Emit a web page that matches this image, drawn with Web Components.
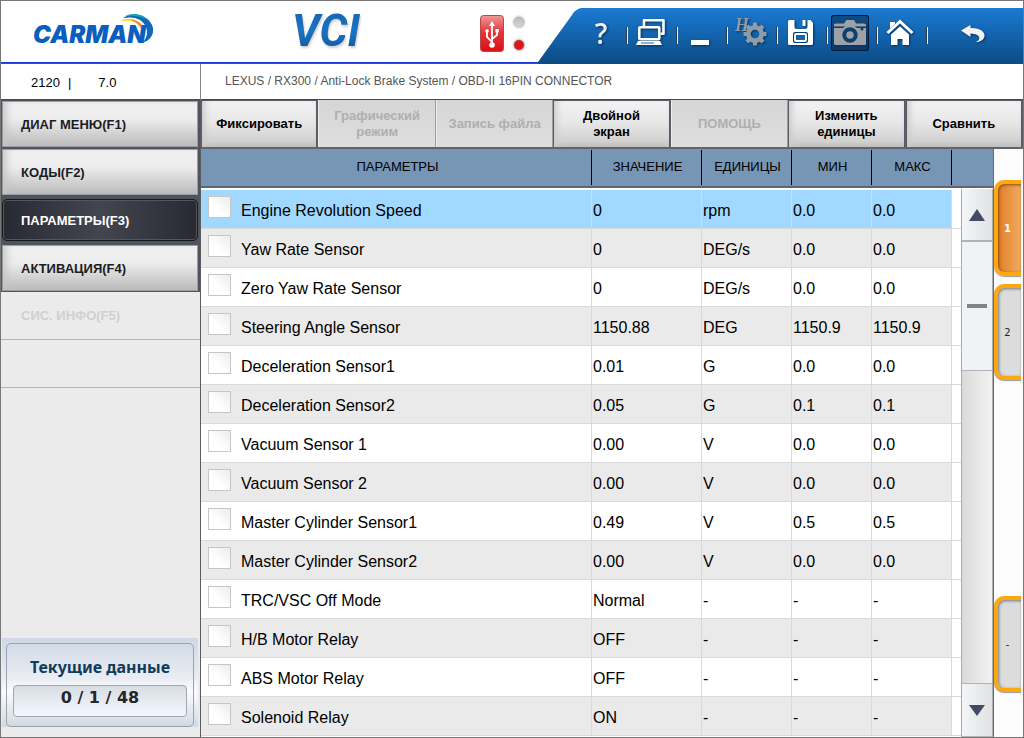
<!DOCTYPE html>
<html lang="ru">
<head>
<meta charset="utf-8">
<title>CARMAN VCI</title>
<style>
html,body{margin:0;height:100%;}
body{font-family:"Liberation Sans",Arial,sans-serif;background:#fff;color:#000;overflow:hidden;}
</style>
</head>
<body>
<vci-app></vci-app>
<script>
const define=(name,html,init)=>{
  const t=document.createElement('template');
  t.innerHTML=html;
  customElements.define(name,class extends HTMLElement{
    constructor(){
      super();
      this.attachShadow({mode:'open'}).append(t.content.cloneNode(true));
    }
    connectedCallback(){ if(init) init(this.shadowRoot,this); }
  });
};

define('tool-button',`
<style>
:host{display:block;flex:none;width:38px;height:36px;}
button{display:block;box-sizing:border-box;width:100%;height:100%;padding:0;border:0;border-radius:3px;background:none;overflow:hidden;}
:host([pressed]) button{background:linear-gradient(#114b84,#093a69);box-shadow:inset 0 0 0 1px #061a38;}
::slotted(svg){display:block;width:38px;height:36px;filter:drop-shadow(1px 1px 1px #06305c);}
</style>
<button type="button"><slot></slot></button>`,
(r,h)=>r.querySelector('button').setAttribute('aria-label',h.getAttribute('label')));

define('app-header',`
<style>
:host{display:flex;height:63px;align-items:flex-start;background:linear-gradient(#1238d6,#1238d6) 0 61px/100% 1px no-repeat,linear-gradient(#555,#555) 0 62px/100% 1px no-repeat,#fff;}
.brand{flex:none;width:134px;height:44px;margin:9px 0 0 31px;overflow:visible;}
.vci{flex:none;width:100px;height:52px;margin:5px 0 0 117px;overflow:visible;}
.link{flex:none;width:48px;height:38px;margin:13px 11px 0 auto;}
nav{display:flex;flex:none;height:56px;margin-top:7px;}
.slope{flex:none;width:43px;height:56px;}
.bar{display:flex;align-items:flex-start;padding:7px 30px 0 0;background:linear-gradient(#1b7ad0,#1467b4 40%,#0c4b82);}
i{flex:none;width:2px;height:17px;margin:12px 3px 0 7px;background:linear-gradient(90deg,#333b44 50%,#e8eef4 50%);}
.gap{width:24px;flex:none;}
</style>
<svg class="brand" viewBox="0 0 134 44">
  <path d="M91 8C101 1 118 5 121 18C122 26 117 31 110 33C117 27 117 16 108 10C103 7 97 7 91 8Z" fill="#1268bd"/>
  <path d="M93 6C101 2 111 4 116 10C109 6 101 5 93 6Z" fill="#16a3b8"/>
  <path d="M88 11C95 7 105 8 110 15C104 11 96 10 88 11Z" fill="#f3e11b"/>
  <path d="M98 9C110 11 115 19 112 27C111 19 107 14 98 9Z" fill="#e98a3a"/>
  <text x="1" y="33" font-family="Inter,sans-serif" font-size="24" font-weight="900" font-style="italic" fill="#0a5ebd">CARMAN</text>
</svg>
<svg class="vci" viewBox="0 0 100 52">
  <defs><linearGradient id="v" x1="0" y1="0" x2="0" y2="1"><stop offset="0" stop-color="#1560ae"/><stop offset=".5" stop-color="#1b73c4"/><stop offset="1" stop-color="#124f90"/></linearGradient></defs>
  <text x="9" y="40" font-family="Roboto,sans-serif" font-size="44" font-weight="700" font-style="italic" fill="url(#v)" style="filter:drop-shadow(1px 2px 1px #ccc)">VCI</text>
</svg>
<svg class="link" viewBox="0 0 48 38" role="img" aria-label="USB">
  <defs>
    <linearGradient id="u" x1="0" y1="0" x2="0" y2="1"><stop offset="0" stop-color="#f0989a"/><stop offset=".45" stop-color="#e2393c"/><stop offset="1" stop-color="#dc0d12"/></linearGradient>
    <linearGradient id="l" x1="0" y1="0" x2="0" y2="1"><stop offset="0" stop-color="#b9b9b9"/><stop offset="1" stop-color="#d8d8d8"/></linearGradient>
  </defs>
  <rect x="1.500" y="1.500" width="23" height="36" rx="3" fill="url(#u)" stroke="#b4484a"/>
  <g stroke="#fff" stroke-width="1.800" fill="none"><path d="M13 10V31M13 28L8 23V17M13 25L18 21V17"/></g>
  <path d="M13 7L16 12H10Z" fill="#fff"/><circle cx="13" cy="31" r="2.800" fill="#fff"/><circle cx="8" cy="17" r="1.800" fill="#fff"/><rect x="16.400" y="15" width="3.400" height="3.400" fill="#fff"/>
  <circle cx="40" cy="8" r="7" fill="#e9e9e9"/><circle cx="40" cy="8" r="5" fill="url(#l)" stroke="#aaa" stroke-width=".6"/>
  <circle cx="40" cy="31" r="7" fill="#e9e9e9"/><circle cx="40" cy="31" r="5" fill="#e01519" stroke="#8e6a6a" stroke-width=".6"/>
</svg>
<nav aria-label="Инструменты">
  <svg class="slope" viewBox="0 0 43 56"><defs><linearGradient id="s" x1="0" y1="0" x2="0" y2="1"><stop offset="0" stop-color="#1b7ad0"/><stop offset=".4" stop-color="#1467b4"/><stop offset="1" stop-color="#0c4b82"/></linearGradient></defs><path d="M43 0C39 1 36 3 34 7L0 54V56H43Z" fill="url(#s)"/></svg>
  <div class="bar">
  <tool-button label="Справка"><svg viewBox="0 0 38 36"><text x="20" y="29" text-anchor="middle" font-family="Open Sans,sans-serif" font-weight="600" font-size="28" fill="#f3f1ee">?</text></svg></tool-button><i></i>
  <tool-button label="Двойной экран"><svg viewBox="0 0 38 36"><g fill="none" stroke="#fff" stroke-width="2.600" stroke-linejoin="round"><path d="M13 11V5.300H32.500V18.700H29.500"/><rect x="8.300" y="12.300" width="20" height="12" rx="1"/></g><path d="M7 26H29L31 30H5Z" fill="#fff"/><path d="M10 28H23" stroke="#1467b4"/></svg></tool-button><i></i>
  <tool-button label="Свернуть"><svg viewBox="0 0 38 36"><rect x="10" y="25" width="18" height="5" fill="#fff"/></svg></tool-button><i></i>
  <tool-button label="Настройки"><svg viewBox="0 0 38 36"><text x="4" y="16" font-family="Liberation Serif,serif" font-size="18" font-weight="700" font-style="italic" fill="#8e9ba8">H</text><g fill="none" stroke="#8e9ba8"><circle cx="24" cy="19" r="6.700" stroke-width="4.800"/><g stroke-width="4.200"><path d="M24 7.500V12M24 26V30.500M12.500 19H17M31 19H35.500M15.900 10.900L18.500 13.500M29.500 24.500L32.100 27.100M32.100 10.900L29.500 13.500M15.900 27.100L18.500 24.500"/></g></g></svg></tool-button><i></i>
  <tool-button label="Сохранить"><svg viewBox="0 0 38 36"><path fill-rule="evenodd" fill="#fff" d="M8.500 5H13.500V12Q13.500 14 15.500 14H24.500Q26.500 14 26.500 12V5H29.500L32 8V28.500Q32 30 30.500 30H8.500Q7 30 7 28.500V6.500Q7 5 8.500 5ZM14 17Q12 17 12 19V26Q12 28 14 28H25Q27 28 27 26V19Q27 17 25 17Z"/><rect x="14" y="19" width="11" height="7" rx="1" fill="#1464ae" stroke="#fff" stroke-width="2"/><path d="M21.500 5V11H24.500V5Z" fill="#fff"/></svg></tool-button><i></i>
  <tool-button label="Снимок экрана" pressed><svg viewBox="0 0 38 36"><path fill="#9ca2a7" d="M3 9Q3 8.500 5 8.500H13L15 5.500Q15.300 5 16 5H22.500Q23 5 23.500 5.500L25 8.500H33Q35 8.500 35 10V11.500H3Z"/><path d="M3 13H35V28.500Q35 30 33.500 30H4.500Q3 30 3 28.500Z" fill="#9ca2a7"/><circle cx="19" cy="20" r="10" fill="#9ca2a7"/><circle cx="19" cy="20" r="5.700" fill="none" stroke="#103f6e" stroke-width="4"/><circle cx="31" cy="14" r="1.500" fill="#103f6e"/></svg></tool-button><i></i>
  <tool-button label="Домой"><svg viewBox="0 0 38 36"><path d="M6.500 18L19 6.500L31.500 18" fill="none" stroke="#fff" stroke-width="3"/><path d="M9 7H14V9L9 13.500Z" fill="#fff"/><path d="M10 19.500L19 11.500L28 19.500V30H21.500V24H16.500V30H10Z" fill="#fff"/></svg></tool-button><i></i>
  <div class="gap"></div>
  <tool-button label="Назад"><svg viewBox="0 0 38 36"><path fill="#f5f3f0" d="M6 15.500L15.500 10V13C25 12.500 30 17 29.500 21C29 24.500 26 27 21 27C26 25 26.500 19 15.500 18.500V22Z"/></svg></tool-button>
  </div>
</nav>`);

define('info-bar',`
<style>
:host{display:grid;grid-template-columns:199px 1fr;height:35px;border-bottom:1px solid #1c5286;line-height:37px;}
.ver{display:flex;gap:8px;padding-left:30px;font-size:13px;}
.ver b{font-weight:400;margin-left:19px;}
.path{border-left:1px solid #888;padding-left:24px;font-size:12px;line-height:34px;color:#555;white-space:nowrap;overflow:hidden;}
</style>
<div class="ver"><span>2120</span><span>|</span><b>7.0</b></div>
<div class="path">LEXUS / RX300 / Anti-Lock Brake System / OBD-II 16PIN CONNECTOR</div>`);

define('menu-item',`
<style>
:host{display:block;height:48px;}
button{box-sizing:border-box;display:block;width:100%;height:48px;padding:0 19px;border:1px solid #50545e;border-right-width:2px;text-align:left;font:700 13px "Liberation Sans",Arial,sans-serif;color:#1c1c22;background:linear-gradient(#f1f1f1,#ececec 40%,#b9b9b9);box-shadow:inset 0 0 0 1px #9a9da4,inset 8px 0 8px -4px #c4c4c4;}
:host([current]){background:#50545e;padding:2px 2px 2px 1px;height:44px;}
:host([current]) button{height:42px;margin-top:1px;padding:0 18px;border:1px solid #17181c;border-radius:5px;color:#fff;background:linear-gradient(90deg,#282933,#44464f 50%,#282933);box-shadow:inset 0 0 0 1px #53555f;}
:host([off]) button{border:0;border-bottom:1px solid #b3b3b3;padding-left:20px;background:none;box-shadow:none;color:#d0d0d0;}
</style>
<button type="button"><slot></slot></button>`,
(r,h)=>{const b=r.querySelector('button'); if(h.hasAttribute('off'))b.disabled=true; if(h.hasAttribute('current'))b.setAttribute('aria-current','page');});

define('status-panel',`
<style>
:host{display:block;padding:5px 4px 0;margin:0 2px 10px 1px;background:linear-gradient(#cfd8e4,#e9edf3 45%,#fbfcff 60%,#d0d9e1);}
section{border:1px solid #98a3ae;border-radius:5px;padding:9px 6px;text-align:center;}
h2{margin:0 0 4px;font:700 16px/28px "Noto Sans","Open Sans",sans-serif;color:#0f3c5c;}
output{display:block;height:30px;font:700 16px/24px "DejaVu Sans",sans-serif;color:#26262a;border:1px solid #a3a8af;border-radius:4px;background:linear-gradient(#d9dee3,#f4f7ff);}
</style>
<section><h2>Текущие данные</h2><output>0 / 1 / 48</output></section>`);

define('side-menu',`
<style>
:host{display:flex;flex-direction:column;justify-content:space-between;background:#ebebeb;min-height:0;}
nav{display:block;}
</style>
<nav aria-label="Меню">
<menu-item>ДИАГ МЕНЮ(F1)</menu-item><menu-item>КОДЫ(F2)</menu-item><menu-item current>ПАРАМЕТРЫ(F3)</menu-item><menu-item>АКТИВАЦИЯ(F4)</menu-item><menu-item off>СИС. ИНФО(F5)</menu-item><menu-item off></menu-item>
</nav>
<status-panel></status-panel>`);

define('action-button',`
<style>
:host{display:block;min-width:0;}
button{display:block;box-sizing:border-box;width:100%;height:100%;padding:0 8px;border:1px solid #5b5c66;border-width:1px 2px 0 1px;font:700 13px/16px "Liberation Sans",Arial,sans-serif;color:#000;background:linear-gradient(#f3f3f3,#e8e8e8 45%,#cbcbcb);box-shadow:inset 6px 0 6px -3px #ccc,inset 0 -4px 4px -2px #bdbdbd;}
button:disabled{color:#afafaf;border-color:#d9d9d9 #9c9c9c #d9d9d9 #eee;border-width:0 1px;background:linear-gradient(#d5d5d5,#dedede);box-shadow:none;}
</style>
<button type="button"><slot></slot></button>`,
(r,h)=>{ if(h.hasAttribute('off')) r.querySelector('button').disabled=true; });

define('action-bar',`
<style>
:host{display:grid;grid-template-columns:repeat(7,1fr);height:47px;border-bottom:2px solid #62646c;}
</style>
<action-button>Фиксировать</action-button><action-button off>Графический<br>режим</action-button><action-button off>Запись файла</action-button><action-button>Двойной<br>экран</action-button><action-button off>ПОМОЩЬ</action-button><action-button>Изменить<br>единицы</action-button><action-button>Сравнить</action-button>`);

define('list-scroller',`
<style>
:host{display:grid;grid-template-rows:53px 129px 1fr 54px;width:30px;border:1px solid #a9adb2;border-width:0 1px;background:linear-gradient(90deg,#dadada,#f2f2f2);}
button{display:grid;place-items:center;padding:0;border:0;background:linear-gradient(90deg,#f3f5f7,#e0e2e4);}
.up{border-bottom:2px solid #b0b4ba;}
.down{border:1px solid #b0b4ba;border-width:1px 0;}
.thumb{display:grid;place-items:center;background:#f0f3f5;border-bottom:1px solid #b0b4ba;}
.thumb::before{content:"";width:20px;height:4px;background:#828282;}
svg{display:block;width:16px;height:12px;}
</style>
<button type="button" class="up" aria-label="Вверх"><svg viewBox="0 0 16 12"><path d="M8 0L16 12H0Z" fill="#434a66"/></svg></button>
<div class="thumb"></div><div></div>
<button type="button" class="down" aria-label="Вниз"><svg viewBox="0 0 16 12"><path d="M0 1H16L8 12Z" fill="#434a66"/></svg></button>`);

const rows=[
['Engine Revolution Speed','0','rpm','0.0','0.0'],
['Yaw Rate Sensor','0','DEG/s','0.0','0.0'],
['Zero Yaw Rate Sensor','0','DEG/s','0.0','0.0'],
['Steering Angle Sensor','1150.88','DEG','1150.9','1150.9'],
['Deceleration Sensor1','0.01','G','0.0','0.0'],
['Deceleration Sensor2','0.05','G','0.1','0.1'],
['Vacuum Sensor 1','0.00','V','0.0','0.0'],
['Vacuum Sensor 2','0.00','V','0.0','0.0'],
['Master Cylinder Sensor1','0.49','V','0.5','0.5'],
['Master Cylinder Sensor2','0.00','V','0.0','0.0'],
['TRC/VSC Off Mode','Normal','-','-','-'],
['H/B Motor Relay','OFF','-','-','-'],
['ABS Motor Relay','OFF','-','-','-'],
['Solenoid Relay','ON','-','-','-']];

define('data-grid',`
<style>
:host{display:grid;grid-template-rows:1fr;min-height:0;overflow:hidden;border-right:1px solid #6a6a6a;}
table,list-scroller{grid-area:1/1;}
table{table-layout:fixed;width:100%;border-collapse:separate;border-spacing:0;align-self:start;}
.v{width:110px}.u{width:90px}.m{width:80px}.f{width:42px}
th{box-sizing:border-box;height:41px;padding:0 0 6px 3px;font-weight:400;font-size:13px;background:linear-gradient(#000,#000) 0 1px/1px 35px no-repeat,#7795b5;box-shadow:inset 0 -2px #fff,inset 0 -4px #5f666e;}
th:first-child{background:#7795b5;}
tbody td{box-sizing:border-box;height:39px;padding:6px 0 0 1px;vertical-align:top;font-size:16px;line-height:30px;border-left:1px solid #dadada;border-bottom:1px solid #dadada;white-space:nowrap;}
tbody td:first-child{border-left:0;padding-left:7px;}
tbody tr:nth-child(even) td{background:#eaeaea;}
tbody tr:first-child td{background:#a0d8ff;}
tbody tr td:last-child{background:#fff !important;}
label{display:flex;align-items:flex-start;gap:10px;}
input{appearance:none;flex:none;box-sizing:border-box;width:23px;height:22px;margin:0;border:1px solid #c6c6c6;background:linear-gradient(45deg,#fff 40%,#ececec);}
list-scroller{justify-self:end;margin-top:40px;}
</style>
<table>
<colgroup><col><col class="v"><col class="u"><col class="m"><col class="m"><col class="f"></colgroup>
<thead><tr><th>ПАРАМЕТРЫ</th><th>ЗНАЧЕНИЕ</th><th>ЕДИНИЦЫ</th><th>МИН</th><th>МАКС</th><th></th></tr></thead>
<tbody></tbody></table>
<list-scroller></list-scroller>`,
r=>{
  r.querySelector('tbody').innerHTML=rows.map(([n,...c])=>`<tr><td><label><input type="checkbox"><span>${n}</span></label></td>${c.map(x=>`<td>${x}</td>`).join('')}<td></td></tr>`).join('');
});

define('page-tabs',`
<style>
:host{display:grid;grid-template-rows:repeat(5,96px);gap:8px;padding:31px 2px 0 0;background:#fcfcfc;overflow:hidden;}
button{box-sizing:border-box;padding:0 4px 0 0;border:4px solid #fda80f;border-right:0;border-radius:10px 0 0 10px;font:10px "DejaVu Sans",sans-serif;color:#223;background:#dcdcdc;box-shadow:inset 1px 1px 3px #777,0 1px 1px #999;}
.on{color:#fff;font-weight:700;background:linear-gradient(90deg,#e37f28,#eeab62);box-shadow:inset 1px 1px 3px #8a4a10,0 1px 1px #999;}
button:last-child{grid-row:5;}
</style>
<button type="button" class="on">1</button><button type="button">2</button><button type="button">-</button>`);

define('vci-app',`
<style>
:host{box-sizing:border-box;display:grid;grid-template-rows:auto auto 1fr;height:100vh;border:1px solid #777;}
main{display:grid;grid-template-columns:199px 1fr;min-height:0;}
.work{display:grid;grid-template-rows:auto 1fr;min-height:0;min-width:0;border-left:1px solid #5c5c60;}
.panel{display:grid;grid-template-columns:1fr 29px;min-height:0;}
</style>
<app-header></app-header>
<info-bar></info-bar>
<main>
  <side-menu></side-menu>
  <div class="work"><action-bar></action-bar><div class="panel"><data-grid></data-grid><page-tabs></page-tabs></div></div>
</main>`);
</script>
</body>
</html>
